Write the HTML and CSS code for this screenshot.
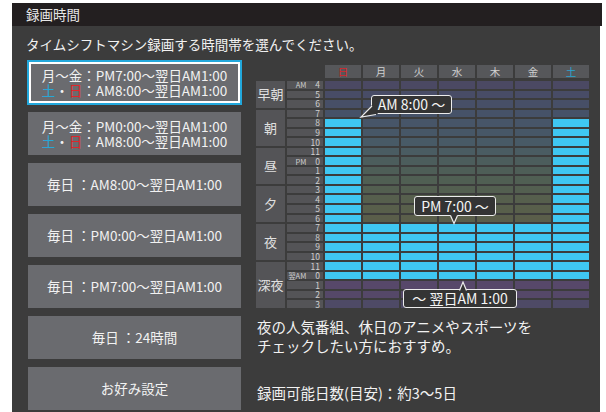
FILE: index.html
```html
<!DOCTYPE html>
<html lang="ja">
<head>
<meta charset="utf-8">
<title>録画時間</title>
<link rel="stylesheet" href="styles.css">
</head>
<body>
<div class="screen">
  <div class="titlebar">録画時間</div>
  <div class="panel">
    <div class="subtitle">タイムシフトマシン録画する時間帯を選んでください。</div>
    <div class="content">
      <div class="buttons">
        <div class="btn sel"><div>月〜金：PM7:00〜翌日AM1:00</div><div><span class="sat">土</span>・<span class="sun">日</span>：AM8:00〜翌日AM1:00</div></div>
        <div class="btn"><div>月〜金：PM0:00〜翌日AM1:00</div><div><span class="sat">土</span>・<span class="sun">日</span>：AM8:00〜翌日AM1:00</div></div>
        <div class="btn"><div>毎日 ：AM8:00〜翌日AM1:00</div></div>
        <div class="btn"><div>毎日 ：PM0:00〜翌日AM1:00</div></div>
        <div class="btn"><div>毎日 ：PM7:00〜翌日AM1:00</div></div>
        <div class="btn"><div>毎日 ：24時間</div></div>
        <div class="btn"><div>お好み設定</div></div>
      </div>
      <div class="right">
        <div class="chart">
          <div class="dayhead">
            <div class="dh-spacer"></div>
            <div class="day sun">日</div>
            <div class="day">月</div>
            <div class="day">火</div>
            <div class="day">水</div>
            <div class="day">木</div>
            <div class="day">金</div>
            <div class="day sat">土</div>
          </div>
          <div class="grid" id="grid"></div>
          <div class="callout c1">AM 8:00 〜<svg class="tail t1" width="20" height="16" viewBox="0 0 20 16"><polygon points="13,2 2,14 19,11" fill="#343434"/><polyline points="13,3 2,14 17,11.5" fill="none" stroke="#ececec" stroke-width="1.2"/></svg></div>
          <div class="callout c2">PM 7:00 〜<svg class="tail t2" width="12" height="12" viewBox="0 0 12 12"><polygon points="2.5,1 6,9.5 9.5,1" fill="#343434"/><polyline points="2.5,1.5 6,9.5 9.5,1.5" fill="none" stroke="#ececec" stroke-width="1.2"/></svg></div>
          <div class="callout c3">〜 翌日AM 1:00<svg class="tail t3" width="12" height="12" viewBox="0 0 12 12"><polygon points="2.5,11 6,2 9.5,11" fill="#343434"/><polyline points="2.5,10.5 6,2 9.5,10.5" fill="none" stroke="#ececec" stroke-width="1.2"/></svg></div>
        </div>
        <p class="desc">夜の人気番組、休日のアニメやスポーツを<br>チェックしたい方におすすめ。</p>
        <p class="estimate">録画可能日数(目安)：約3〜5日</p>
      </div>
    </div>
  </div>
</div>
<script src="script.js"></script>
</body>
</html>
```

FILE: styles.css
```css
* { box-sizing: border-box; }
html, body { margin: 0; padding: 0; background: #ffffff; }
body {
  font-family: "Noto Sans CJK JP", "Noto Sans", sans-serif;
  color: #f0f0f0;
  width: 606px;
  height: 412px;
  overflow: hidden;
}
.screen { margin: 3px 0 0 12px; width: 590px; }
.titlebar {
  height: 23px;
  background: #231f20;
  color: #e6e6e6;
  font-size: 13.5px;
  line-height: 23px;
  padding-left: 14px;
}
.panel {
  width: 588px;
  height: 386px;
  background: #3c3c3c;
}
.subtitle {
  height: 35px;
  padding: 9px 0 0 14px;
  font-size: 13.5px;
  line-height: 18px;
  color: #f2f2f2;
}
.content { display: flex; padding-left: 16px; }
.buttons { width: 213px; display: flex; flex-direction: column; gap: 8px; }
.btn {
  height: 43px;
  background: #6a6b6f;
  color: #f2f2f2;
  font-size: 13.5px;
  line-height: 15px;
  display: flex;
  flex-direction: column;
  justify-content: center;
  align-items: center;
  white-space: nowrap;
}
.btn.sel {
  box-shadow: 0 0 0 1px #22a8dc, inset 0 0 0 1px #22a8dc, inset 0 0 0 3px #ffffff;
}
.sat { color: #29a6d6; }
.sun { color: #e0262a; }
.right { margin-left: 15px; margin-top: 4px; width: 333px; }
.chart { position: relative; width: 333px; }
.dayhead {
  display: grid;
  grid-template-columns: 29px 36px repeat(7, 36px);
  column-gap: 2px;
  height: 13px;
  margin-bottom: 3px;
}
.dh-spacer { grid-column: span 2; }
.day {
  background: #56575a;
  color: #d0d0d0;
  font-size: 10.5px;
  line-height: 13px;
  text-align: center;
}
.day.sun { color: #d8262c; }
.day.sat { color: #2aa5d0; }
.grid {
  display: grid;
  grid-template-columns: 29px 36px repeat(7, 36px);
  grid-template-rows: repeat(24, 1fr);
  column-gap: 2px;
  row-gap: 2px;
  height: 227px;
}
.grp {
  background: #545457;
  color: #e0e0e0;
  font-size: 13px;
  display: flex;
  align-items: center;
  justify-content: center;
  line-height: 14px;
}
.num {
  background: #545457;
  color: #cfcfcf;
  font-size: 8.5px;
  line-height: 7px;
  display: flex;
  justify-content: flex-end;
  align-items: center;
  padding-right: 3px;
  white-space: nowrap;
}
.num .pre { margin-right: 9px; font-size: 7.5px; }
.r0 { background: #4b4963; }
.r1 { background: #484c66; }
.r2 { background: #474f67; }
.r3 { background: #465268; }
.r4 { background: #475568; }
.r5 { background: #475767; }
.r6 { background: #485a66; }
.r7 { background: #4a5c62; }
.r8 { background: #4c5d5c; }
.r9 { background: #4e5e57; }
.r10 { background: #505f53; }
.r11 { background: #535f50; }
.r12 { background: #565f4d; }
.r13 { background: #585f4b; }
.r14 { background: #5a5e4a; }
.r15 { background: #5a5a4c; }
.r16 { background: #595550; }
.r17 { background: #585055; }
.r18 { background: #574c5b; }
.r19 { background: #574a62; }
.r20 { background: #574866; }
.r21 { background: #57486a; }
.r22 { background: #554868; }
.r23 { background: #4e4a66; }
.cell.on { background: #3fc7f2; }
.callout {
  position: absolute;
  border: 1px solid #ececec;
  border-radius: 3px;
  background: #343434;
  color: #f4f4f4;
  font-size: 14px;
  line-height: 17px;
  text-align: center;
  white-space: nowrap;
}
.c1 { left: 115px; top: 30px; width: 81px; height: 19px; }
.c2 { left: 158px; top: 131px; width: 82px; height: 20px; line-height: 18px; }
.c3 { left: 147px; top: 224px; width: 114px; height: 19px; }
.tail { position: absolute; overflow: visible; }
.t1 { left: -13px; top: 7px; }
.t2 { left: 33px; top: 17px; }
.t3 { left: 53px; top: -10px; }
.desc {
  margin: 9px 0 0 1px;
  font-size: 14.5px;
  line-height: 19px;
  color: #f2f2f2;
}
.estimate {
  margin: 28px 0 0 1px;
  font-size: 14.5px;
  line-height: 19px;
  color: #f2f2f2;
}
```

FILE: script.js
```js
(function () {
  var grid = document.getElementById('grid');
  var rows = [
    ['AM', '4'], ['', '5'], ['', '6'], ['', '7'], ['', '8'], ['', '9'], ['', '10'], ['', '11'],
    ['PM', '0'], ['', '1'], ['', '2'], ['', '3'], ['', '4'], ['', '5'], ['', '6'], ['', '7'],
    ['', '8'], ['', '9'], ['', '10'], ['', '11'],
    ['翌AM', '0'], ['', '1'], ['', '2'], ['', '3']
  ];
  var groups = { 0: ['早朝', 3], 3: ['朝', 4], 7: ['昼', 4], 11: ['夕', 4], 15: ['夜', 4], 19: ['深夜', 5] };
  for (var i = 0; i < rows.length; i++) {
    if (groups[i]) {
      var g = document.createElement('div');
      g.className = 'grp';
      g.style.gridRow = 'span ' + groups[i][1];
      g.textContent = groups[i][0];
      grid.appendChild(g);
    }
    var n = document.createElement('div');
    n.className = 'num';
    if (rows[i][0]) {
      var p = document.createElement('span');
      p.className = 'pre';
      p.textContent = rows[i][0];
      n.appendChild(p);
    }
    var d = document.createElement('span');
    d.textContent = rows[i][1];
    n.appendChild(d);
    grid.appendChild(n);
    for (var day = 0; day < 7; day++) {
      var c = document.createElement('div');
      var weekend = (day === 0 || day === 6);
      var on = weekend ? (i >= 4 && i <= 20) : (i >= 15 && i <= 20);
      c.className = 'cell r' + i + (on ? ' on' : '');
      grid.appendChild(c);
    }
  }
})();
```
